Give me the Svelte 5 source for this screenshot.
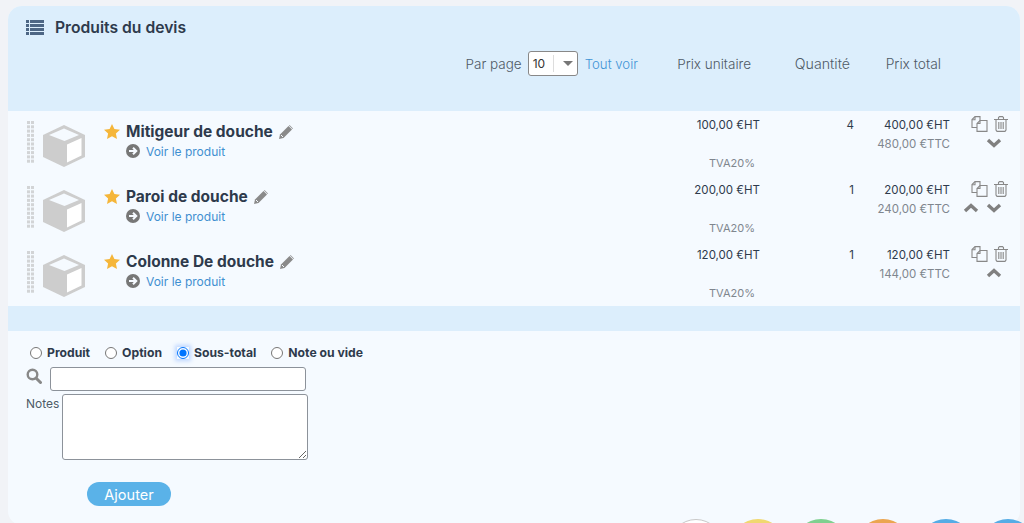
<script>
	const products = [
		{ name: "Mitigeur de douche", unit: "100,00 €HT", qty: 4, ht: "400,00 €HT", ttc: "480,00 €TTC", up: false, down: true },
		{ name: "Paroi de douche", unit: "200,00 €HT", qty: 1, ht: "200,00 €HT", ttc: "240,00 €TTC", up: true, down: true },
		{ name: "Colonne De douche", unit: "120,00 €HT", qty: 1, ht: "120,00 €HT", ttc: "144,00 €TTC", up: true, down: false }
	];
	const kinds = ["Produit", "Option", "Sous-total", "Note ou vide"];
	const colors = ["white", "yellow", "green", "orange", "blue", "blue"];
	const dots = Array.from({ length: 10 }, (_, i) => i);
</script>

<div class="card">
	<header class="head">
		<h2 class="title">
			<svg class="list-icon" viewBox="0 0 18 15" width="18" height="15">
				{#each [0, 4, 8, 12] as y}
					<rect x="0" {y} width="3" height="3" />
					<rect x="4" {y} width="14" height="3" />
				{/each}
			</svg>
			Produits du devis
		</h2>
		<div class="cols labels">
			<div class="pager">
				<span>Par page</span>
				<div class="select">
					<span class="select-value">10</span>
					<span class="select-arrow"></span>
				</div>
				<a href="#all" class="all">Tout voir</a>
			</div>
			<span class="label-unit">Prix unitaire</span>
			<span class="label-qty">Quantité</span>
			<span class="label-total">Prix total</span>
		</div>
	</header>

	<div class="rows">
		{#each products as p}
			<div class="cols row">
				<svg class="handle" viewBox="0 0 7 43" width="7" height="43">
					{#each dots as d}
						<rect x="0" y={d * 4.3} width="3" height="3" />
						<rect x="4" y={d * 4.3} width="3" height="3" />
					{/each}
				</svg>
				<svg class="cube" viewBox="0 0 44 44" width="44" height="44">
					<path d="M21 1 42 11V33L21 43 0 33V11Z" fill="#cdcdcd" />
					<path d="M21 4.500 36 11 21.500 17 6 11Z" fill="#f5faff" />
					<path d="M24 20.500 38.500 14V31.500L24 38.500Z" fill="#fff" />
				</svg>
				<div class="info">
					<div class="name">
						<svg class="star" viewBox="0 0 16 15" width="16" height="15">
							<path d="M8 0 10.400 5 16 5.700 11.900 9.500 13 15 8 12.300 3 15 4.100 9.500 0 5.700 5.600 5Z" />
						</svg>
						<strong>{p.name}</strong>
						<svg class="pencil" viewBox="0 0 14 14" width="14" height="14">
							<path d="M0 14 1 9.500 9.500 1 13 4.500 4.500 13Z" />
							<path d="M10.500 0 14 3.500 13.500 4 10 .5Z" />
							<path d="M2 10 4 12" stroke="#f5faff" stroke-width="1" />
						</svg>
					</div>
					<div class="link">
						<svg viewBox="0 0 14 14" width="14" height="14">
							<circle cx="7" cy="7" r="7" fill="#777" />
							<path d="M3 7H10M7 3.700 10.300 7 7 10.300" fill="none" stroke="#f5faff" stroke-width="2" />
						</svg>
						<a href="#voir">Voir le produit</a>
					</div>
				</div>
				<div class="unit">
					<span>{p.unit}</span>
					<span class="tva">TVA20%</span>
				</div>
				<div class="qty">{p.qty}</div>
				<div class="total">
					<span>{p.ht}</span>
					<span class="ttc">{p.ttc}</span>
				</div>
				<div class="actions">
					<div class="tools">
						<svg viewBox="0 0 17 16" width="17" height="16" fill="none" stroke="#888" stroke-width="1.100">
							<path d="M6 11.500H1V3.500L4 .6H9V4.500" />
							<path d="M4 .8V3.800H1" />
							<path d="M6 15.400V7.500L9 4.500H16V15.400Z" fill="#f5faff" />
							<path d="M9 4.500V7.500H6" />
						</svg>
						<svg viewBox="0 0 14 16" width="14" height="16" fill="none" stroke="#888" stroke-width="1.100">
							<path d="M0 3.500H14M4.500 3.500V1.500L5.500 .6H8.500L9.500 1.500V3.500" />
							<path d="M2 3.500V14L3 15.400H11L12 14V3.500" />
							<path d="M4.800 6V13M7 6V13M9.200 6V13" />
						</svg>
					</div>
					<div class="moves">
						{#if p.up}
							<svg viewBox="0 0 16 10" width="16" height="10"><path d="M2 8 8 2.500 14 8" /></svg>
						{/if}
						{#if p.down}
							<svg viewBox="0 0 16 10" width="16" height="10"><path d="M2 2 8 7.500 14 2" /></svg>
						{/if}
					</div>
				</div>
			</div>
		{/each}
	</div>

	<div class="strip"></div>

	<form class="form">
		<div class="kinds">
			{#each kinds as kind}
				<label class="kind">
					<input type="radio" name="kind" checked={kind === "Sous-total"} />
					{kind}
				</label>
			{/each}
		</div>
		<div class="search">
			<svg viewBox="0 0 16 16" width="16" height="16" fill="none" stroke="#888">
				<circle cx="6.500" cy="6.500" r="4.800" stroke-width="2.400" />
				<path d="M10 10 14.500 14.500" stroke-width="3" stroke-linecap="round" />
			</svg>
			<input type="text" />
		</div>
		<div class="notes">
			<label for="notes">Notes</label>
			<textarea id="notes"></textarea>
		</div>
		<button type="button" class="add">Ajouter</button>
		<div class="swatches">
			{#each colors as c}
				<span class="swatch {c}"></span>
			{/each}
		</div>
	</form>
</div>

<style>
	:global(html),
	:global(body) {
		overflow: hidden;
		background: #f1f3f7;
	}

	.card {
		margin: 6px 4px 0 8px;
		border-radius: 14px;
		background: #f5faff;
		color: #2e3a4c;
		font-family: Inter, "Noto Sans", sans-serif;
		font-size: 11.500px;
	}

	.head {
		height: 105px;
		padding-top: 12px;
		box-sizing: border-box;
		border-radius: 14px 14px 0 0;
		background: #dceefc;
	}

	.title {
		display: flex;
		align-items: center;
		gap: 11px;
		margin: 0;
		padding-left: 18px;
		height: 19px;
		font-size: 15.700px;
		font-weight: 600;
	}

	.list-icon {
		fill: #4d6684;
	}

	/* columns shared by the header and the rows */
	.cols {
		display: grid;
		grid-template-columns: 16px 61px 1fr 100px 94px 96px 70px;
		padding-left: 19px;
	}

	.labels {
		align-items: center;
		margin-top: 14px;
		height: 25px;
		font-size: 13.500px;
		font-weight: 300;
		color: #4f5a66;
	}

	.pager {
		grid-column: 1 / 4;
		display: flex;
		align-items: center;
		justify-content: flex-end;
		gap: 6px;
		padding-right: 22px;
	}

	.select {
		display: flex;
		align-items: center;
		box-sizing: border-box;
		width: 50px;
		height: 25px;
		border: 1px solid #888;
		border-radius: 3px;
		background: #fff;
		font-size: 12px;
		font-weight: 400;
		color: #333;
	}

	.select-value {
		width: 20px;
		padding-left: 4px;
		line-height: 17px;
		border-right: 1px solid #ddd;
	}

	.select-arrow {
		margin-left: 9px;
		border: 5px solid transparent;
		border-top-color: #777;
		border-bottom-width: 0;
	}

	.all {
		margin-left: 1px;
		font-size: 13.200px;
		color: #3f94d6;
		text-decoration: none;
	}

	.label-unit {
		text-align: right;
		padding-right: 9px;
	}

	.label-total {
		text-align: right;
		padding-right: 9px;
		font-size: 13.800px;
	}

	.label-qty {
		text-align: right;
		padding-right: 4px;
		font-size: 14.200px;
	}

	.row {
		height: 65px;
		padding-top: 5px;
		box-sizing: border-box;
	}

	.handle {
		margin-top: 5px;
		fill: #d2d4d6;
	}

	.cube {
		margin-top: 8px;
	}

	.name {
		display: flex;
		align-items: center;
		gap: 6px;
		margin-top: 6px;
		height: 19px;
		font-size: 15.500px;
	}

	.name strong {
		font-weight: 700;
	}

	.star {
		fill: #f5b63a;
	}

	.pencil {
		fill: #8a8a8a;
	}

	.link {
		display: flex;
		align-items: center;
		gap: 6px;
		margin: 2px 0 0 22px;
		height: 16px;
		font-size: 12px;
	}

	.link a {
		color: #3f8fd0;
		text-decoration: none;
	}

	.unit,
	.total {
		display: flex;
		flex-direction: column;
		align-items: flex-end;
		line-height: 19px;
	}

	.tva {
		margin-top: 19px;
		padding-right: 5px;
		font-size: 11px;
		color: #7f868e;
	}

	.ttc {
		color: #7f868e;
	}

	.qty {
		text-align: right;
		line-height: 19px;
	}

	.actions {
		padding-left: 21px;
	}

	.tools {
		display: flex;
		align-items: center;
		gap: 6px;
	}

	.moves {
		display: flex;
		justify-content: flex-end;
		gap: 7px;
		margin-top: 6px;
		padding-right: 18px;
	}

	.moves svg {
		flex: none;
	}

	.moves path {
		fill: none;
		stroke: #808080;
		stroke-width: 3.400;
	}

	.strip {
		height: 25px;
		background: #dceefc;
	}

	.form {
		padding: 13px 0 0 18px;
	}

	.kinds {
		display: flex;
		padding-left: 4px;
		height: 17px;
		gap: 15px;
	}

	.kind {
		display: flex;
		align-items: center;
		gap: 5px;
		font-weight: 700;
		font-size: 12.200px;
	}

	.kind input {
		width: 12px;
		height: 12px;
		margin: 0;
	}

	.kind input:checked {
		box-shadow: 0 0 4px 2px rgba(90, 150, 255, 0.35);
		border-radius: 50%;
	}

	.search {
		display: flex;
		align-items: flex-start;
		gap: 8px;
		margin-top: 6px;
	}

	.search svg {
		margin-top: 1px;
	}

	.search input {
		box-sizing: border-box;
		width: 256px;
		height: 24px;
		margin: 0;
		border: 1px solid #8c929a;
		border-radius: 3px;
		background: #fff;
	}

	.notes {
		display: flex;
		align-items: flex-start;
		gap: 3px;
		margin-top: 3px;
		font-size: 12px;
	}

	.notes label {
		margin-top: 2px;
		color: #4f5a66;
	}

	.notes textarea {
		box-sizing: border-box;
		width: 246px;
		height: 66px;
		margin: 0;
		border: 1px solid #8c929a;
		border-radius: 3px;
		background: #fff;
	}

	.add {
		display: block;
		width: 84px;
		height: 24px;
		margin: 22px 0 0 61px;
		padding: 0;
		border: 0;
		border-radius: 12px;
		background: #5ab2e8;
		color: #fff;
		font: 400 14.500px Inter, sans-serif;
	}

	.swatches {
		display: flex;
		justify-content: flex-end;
		gap: 8.500px;
		height: 6px;
		margin: 13px -15px 0 0;
	}

	.swatch {
		flex: none;
		box-sizing: border-box;
		width: 54px;
		height: 54px;
		border-radius: 50%;
	}

	.white {
		background: #fff;
		border: 1px solid #c8c8c8;
	}

	.yellow {
		background: #f0d870;
	}

	.green {
		background: #7fd08f;
	}

	.orange {
		background: #eba550;
	}

	.blue {
		background: #55ace5;
	}
</style>
